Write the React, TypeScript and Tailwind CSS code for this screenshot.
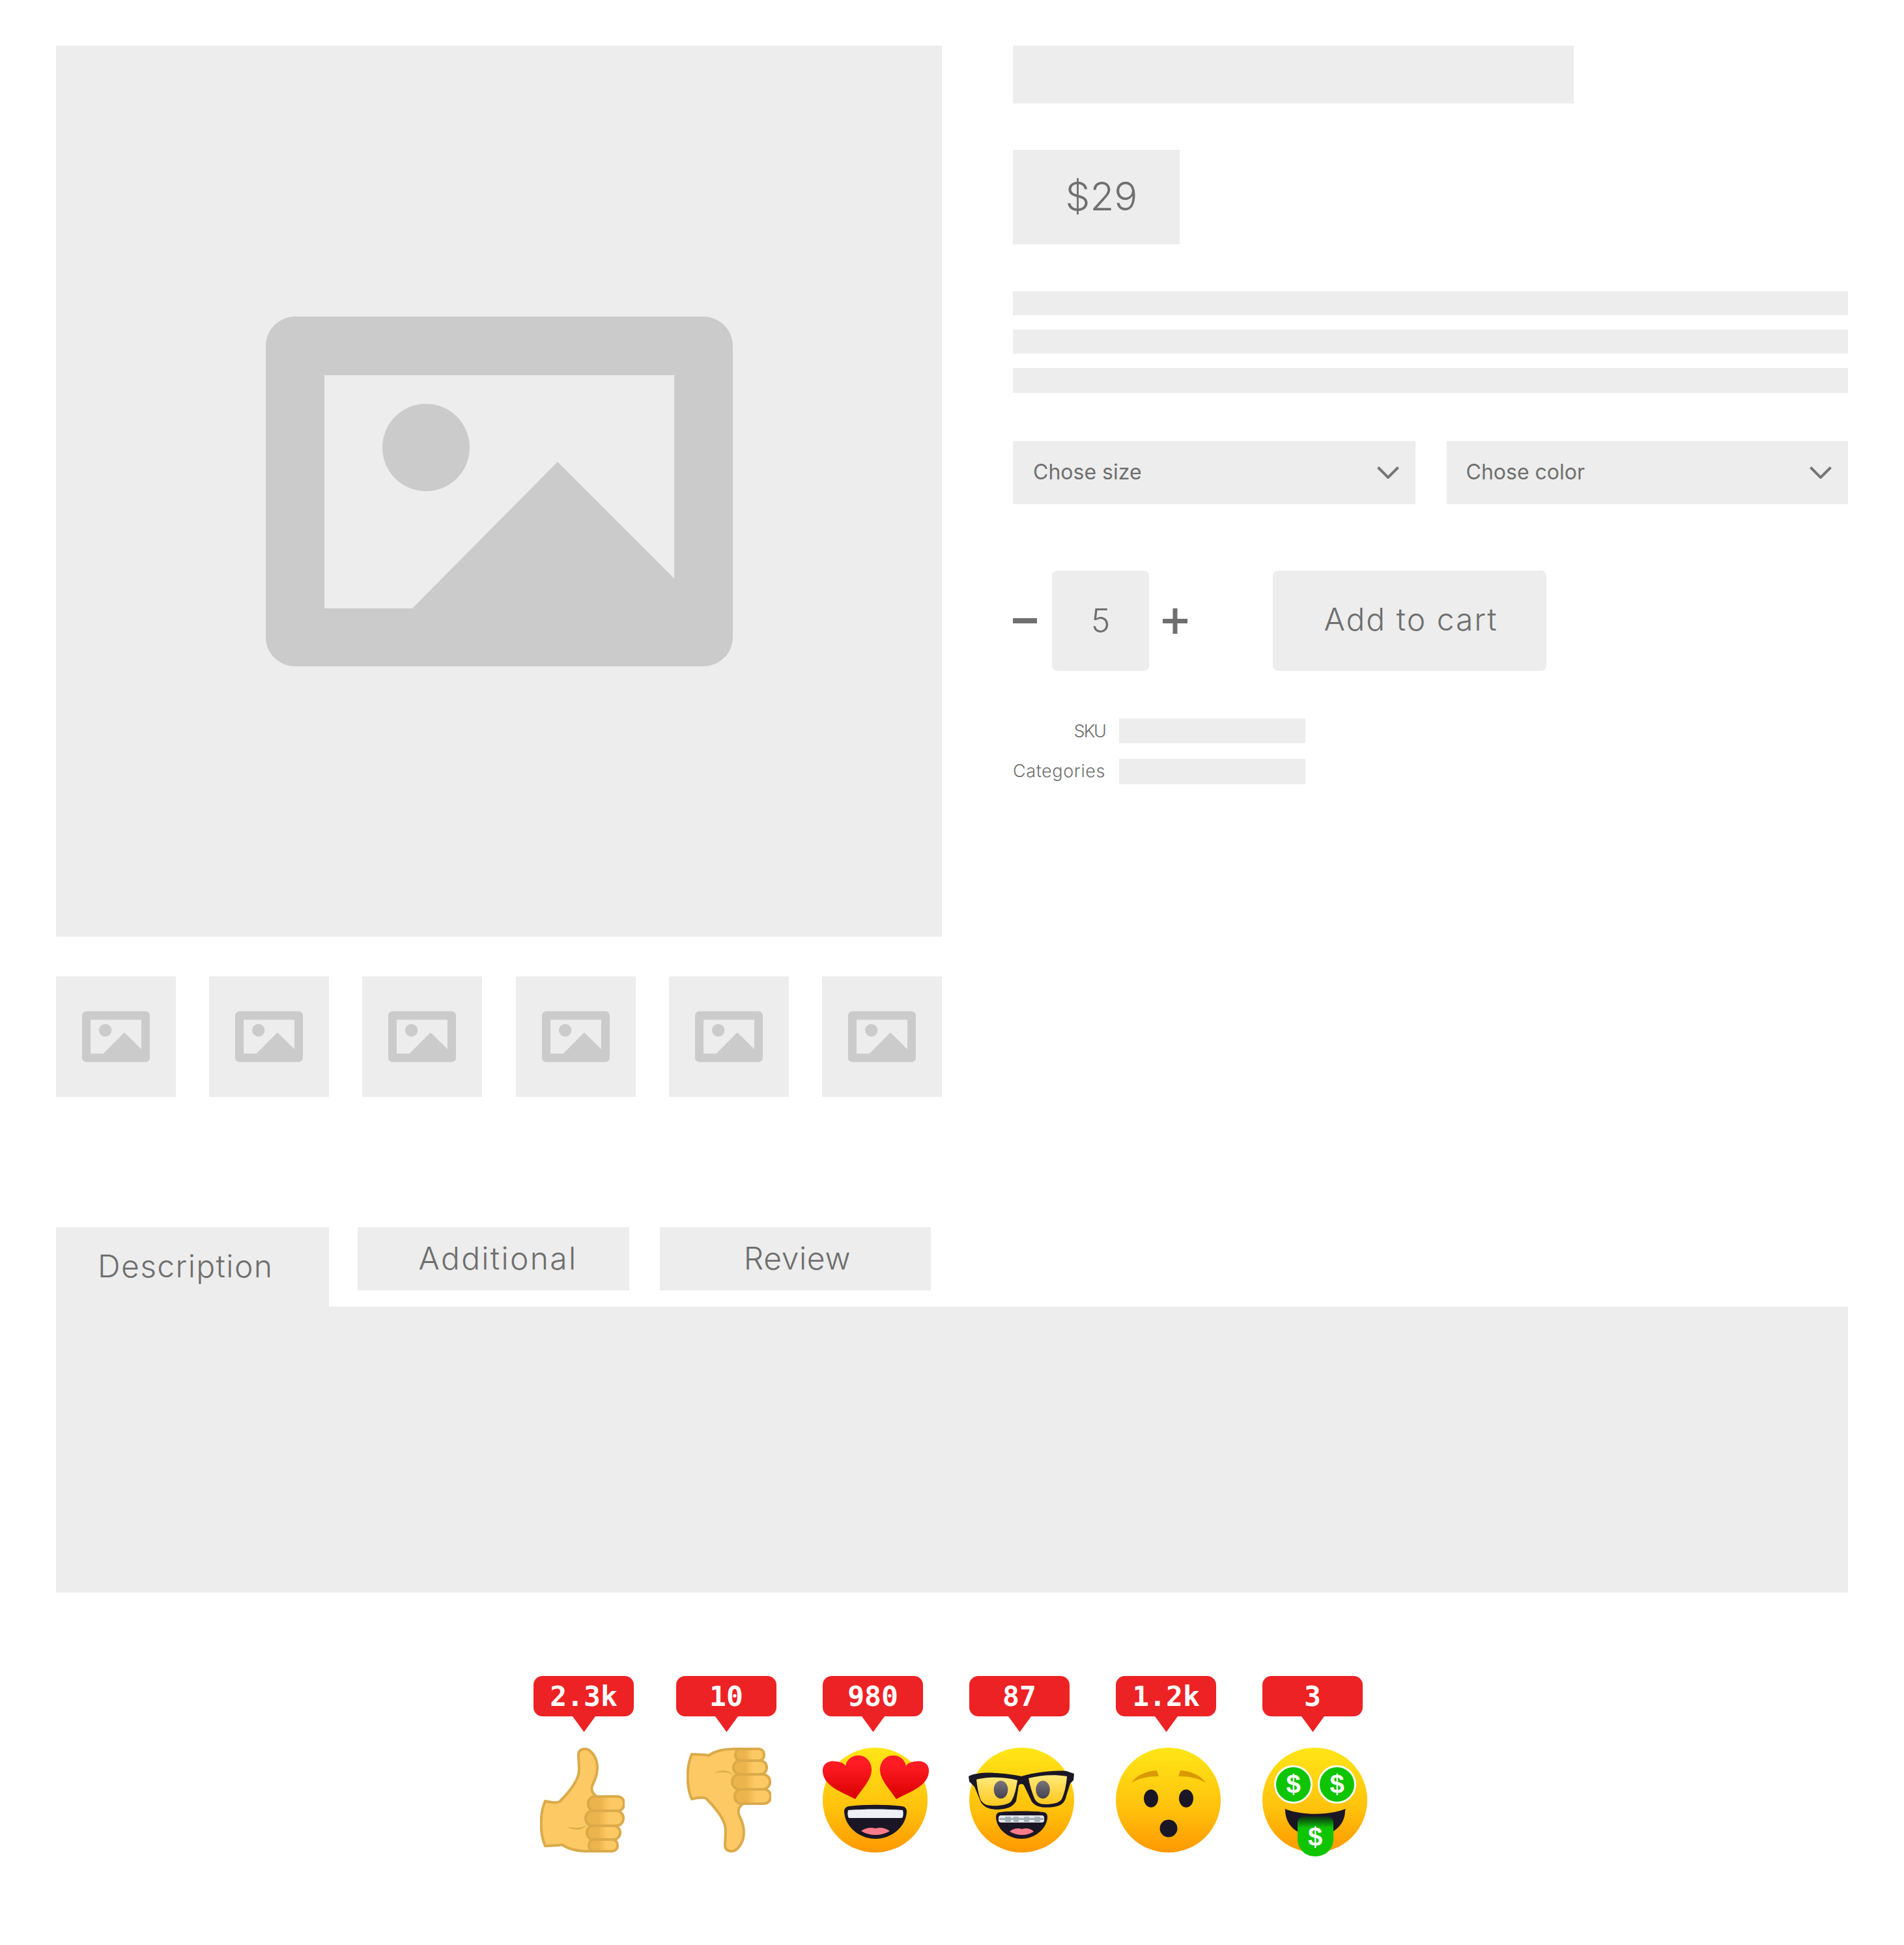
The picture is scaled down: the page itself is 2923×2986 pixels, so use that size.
const reactions = [
  { count: '2.3k', kind: 'up' },
  { count: '10', kind: 'down' },
  { count: '980', kind: 'love' },
  { count: '87', kind: 'nerd' },
  { count: '1.2k', kind: 'wow' },
  { count: '3', kind: 'money' },
]

function ImageIcon({ className }: { className: string }) {
  return (
    <svg viewBox="0 0 717 537" className={className} fill="#cbcbcb">
      <path
        fillRule="evenodd"
        d="M45 0H672A45 45 0 0 1 717 45V492A45 45 0 0 1 672 537H45A45 45 0 0 1 0 492V45A45 45 0 0 1 45 0ZM90 90V448H225L448 223L627 402V90Z"
      />
      <circle cx="246" cy="201" r="67" />
    </svg>
  )
}

function Chevron() {
  return (
    <svg viewBox="0 0 34 19" className="w-[34px] h-[19px]" fill="none" stroke="#757575" strokeWidth="4">
      <path d="M1.5 1.5L17 17L32.5 1.5" />
    </svg>
  )
}

function Thumb({ flip }: { flip?: boolean }) {
  const id = flip ? 'fd' : 'fu'
  return (
    <svg viewBox="0 0 130 161" className={`w-[130px] h-[161px] ${flip ? '-scale-y-100 ml-[16px]' : 'ml-[10px]'}`}>
      <defs>
        <linearGradient id={id} x1="0" x2="1" y1="0" y2="0">
          <stop offset="0.35" stopColor="#ecb44c" />
          <stop offset="0.6" stopColor="#fdc964" />
        </linearGradient>
      </defs>
      <path
        d="M8 82C16 84 25 85 30 83C45 68 60 50 60 34C60 25 59 18 59 11C59 5 63 2 69 2C78 2 88 15 88 31C88 42 84 50 80 59C78 66 82 72 87 75L90 159H74C58 159 44 156 34 149C25 151 16 150 8 151C-1 130 0 100 8 82Z"
        fill="#fdc964"
        stroke="#dbaa4a"
        strokeWidth="4"
        strokeLinejoin="round"
      />
      <path d="M42 122C52 123 62 125 72 119C63 128 52 127 42 122Z" fill="#dbaa4a" />
      <g fill={`url(#${id})`} stroke="#dbaa4a" strokeWidth="4">
        <rect x="75" y="141" width="44" height="18" rx="8" />
        <rect x="72" y="120" width="51" height="21" rx="10" />
        <rect x="70" y="97" width="58" height="23" rx="11" />
        <rect x="74" y="75" width="55" height="22" rx="10" />
      </g>
    </svg>
  )
}

function FaceBase({ id, children }: { id: string; children: React.ReactNode }) {
  return (
    <svg viewBox="0 0 161 161" className="w-[161px] h-[161px] overflow-visible">
      <defs>
        <linearGradient id={id} x1="0" x2="0" y1="0" y2="1">
          <stop offset="0" stopColor="#ffe617" />
          <stop offset="0.6" stopColor="#ffc00c" />
          <stop offset="1" stopColor="#ff9800" />
        </linearGradient>
      </defs>
      <circle cx="80.5" cy="80.5" r="80.5" fill={`url(#${id})`} />
      {children}
    </svg>
  )
}

function Love() {
  const heart = 'M50 79C30 68 2 60 0 37C-1 24 10 20 18 21C26 21 33 24 35 28C37 18 45 12 55 12C68 12 76 24 75 36C74 50 60 64 50 79Z'
  return (
    <FaceBase id="love">
      <defs>
        <linearGradient id="heart" x1="0" x2="0" y1="0" y2="1">
          <stop offset="0.2" stopColor="#ff1c24" />
          <stop offset="1" stopColor="#d90000" />
        </linearGradient>
      </defs>
      <path d={heart} fill="url(#heart)" />
      <path d={heart} fill="url(#heart)" transform="translate(163 0) scale(-1 1)" />
      <path d="M40 90C65 87 97 87 122 90C127 91 129 94 129 98C128 122 105 140 81 140C57 140 34 122 33 98C33 94 35 91 40 90Z" fill="#1a1626" />
      <path d="M39 96C65 94 97 94 123 96C124 100 124 105 122 108H40C38 105 38 100 39 96Z" fill="#eef0f6" />
      <path d="M59 128C66 123 74 122 81 124C88 122 96 123 103 128C96 132 89 134 81 134C73 134 66 132 59 128Z" fill="#ff7b8a" />
    </FaceBase>
  )
}

function Nerd() {
  return (
    <FaceBase id="nerd">
      <defs>
        <linearGradient id="lens" x1="0" x2="0" y1="0" y2="1">
          <stop offset="0" stopColor="#ffe97a" />
          <stop offset="1" stopColor="#ffc81e" />
        </linearGradient>
        <linearGradient id="pupil" x1="0" x2="0" y1="0" y2="1">
          <stop offset="0" stopColor="#77757c" />
          <stop offset="1" stopColor="#45414f" />
        </linearGradient>
      </defs>
      <path
        d="M-1 44C10 38 30 38 42 39C58 40 70 42 80 44C90 41 100 39 108 38C122 36 138 35 149 36L161 40L160 50L155 55L149 74C147 84 142 89 130 91C115 93 103 92 96 83L84 58C82 55 78 55 76 58L72 82C66 92 58 94 45 95C33 95 24 93 18 84L8 60L0 52Z"
        fill="#1a1626"
      />
      <path d="M11 49C25 45 50 44 74 50C72 62 70 74 64 83C58 88 45 90 34 89C25 89 20 85 17 79C14 70 12 60 11 49Z" fill="url(#lens)" />
      <path d="M91 47C110 42 130 41 150 44C149 58 146 70 142 79C138 85 128 87 117 87C108 87 103 84 100 78C96 68 93 58 91 47Z" fill="url(#lens)" />
      <ellipse cx="48.5" cy="64.5" rx="10.8" ry="13.7" fill="url(#pupil)" />
      <ellipse cx="113" cy="64.5" rx="10.8" ry="13.7" fill="url(#pupil)" />
      <path d="M47 99C65 97 97 97 114 99C119 100 120 103 120 107C119 125 100 140 80 140C60 140 42 125 41 107C41 103 42 100 47 99Z" fill="#1a1626" />
      <rect x="45" y="104" width="70" height="11" rx="4" fill="#e6e8ee" />
      <g fill="#a3b0b8">
        <rect x="46" y="108" width="68" height="3" />
        <rect x="55" y="106" width="9" height="8" rx="1" />
        <rect x="68" y="106" width="8" height="8" rx="1" />
        <rect x="84" y="106" width="8" height="8" rx="1" />
        <rect x="100" y="106" width="9" height="8" rx="1" />
      </g>
      <path d="M62 129C67 124 75 123 81 125C87 123 95 124 99 129C94 132 88 134 81 134C74 134 68 132 62 129Z" fill="#ff7b8a" />
    </FaceBase>
  )
}

function Wow() {
  return (
    <FaceBase id="wow">
      <path d="M24 54C30 44 45 36 63 35L66 44C50 44 35 47 24 54Z" fill="#d99a00" />
      <path d="M138 54C132 44 117 36 99 35L96 44C112 44 127 47 138 54Z" fill="#d99a00" />
      <ellipse cx="54" cy="78" rx="11" ry="13.7" fill="#1a1626" />
      <ellipse cx="108" cy="78" rx="11" ry="13.7" fill="#1a1626" />
      <ellipse cx="81" cy="124" rx="13.5" ry="13.5" fill="#1a1626" />
    </FaceBase>
  )
}

function Money() {
  const dollar = "font-['Liberation_Sans',sans-serif] font-bold"
  return (
    <FaceBase id="money">
      <defs>
        <linearGradient id="tongue" x1="0" x2="0" y1="0" y2="1">
          <stop offset="0.02" stopColor="#0d3a14" />
          <stop offset="0.28" stopColor="#0fc400" />
        </linearGradient>
      </defs>
      <circle cx="47.5" cy="56.5" r="28" fill="#0fc400" stroke="#fff" strokeWidth="3" />
      <circle cx="114.5" cy="56.5" r="28" fill="#0fc400" stroke="#fff" strokeWidth="3" />
      <text x="47.5" y="70" textAnchor="middle" fontSize="40" fill="#fff" className={dollar}>$</text>
      <text x="114.5" y="70" textAnchor="middle" fontSize="40" fill="#fff" className={dollar}>$</text>
      <path d="M35 95C33 93 34 94 37 95C62 104 100 104 125 95C128 94 128 93 127 97C127 110 120 122 108 129H54C42 122 35 110 35 95Z" fill="#1a1626" />
      <path d="M54 116C54 109 58 106 64 106H99C105 106 109 109 109 116V140C109 156 97 167 81 167C66 167 54 156 54 140Z" fill="url(#tongue)" />
      <text x="81" y="151" textAnchor="middle" fontSize="40" fill="#fff" className={dollar}>$</text>
    </FaceBase>
  )
}

function Reaction({ count, kind }: { count: string; kind: string }) {
  return (
    <div className={`flex flex-col gap-[24px] ${kind === 'up' ? 'w-[155px]' : 'w-[161px]'}`}>
      <div className="w-[154px]">
        <div className="h-[62px] rounded-[14px] bg-[#ed2224] flex items-center justify-center text-white text-[43px] leading-none font-bold font-['DejaVu_Sans_Mono',monospace]">
          {count}
        </div>
        <svg viewBox="0 0 35 24" className="w-[35px] h-[24px] mx-auto block" fill="#ed2224">
          <path d="M0 0H35L17.5 24Z" />
        </svg>
      </div>
      {kind === 'up' && <Thumb />}
      {kind === 'down' && <Thumb flip />}
      {kind === 'love' && <Love />}
      {kind === 'nerd' && <Nerd />}
      {kind === 'wow' && <Wow />}
      {kind === 'money' && <Money />}
    </div>
  )
}

export default function App() {
  return (
    <div className="min-h-screen bg-white pt-[70px] px-[86px] text-[#6f6f6f] font-['Inter',sans-serif] font-light">
      <div className="flex gap-[109px]">
        <div className="w-[1360px]">
          <div className="h-[1368px] bg-[#ededed] flex items-center justify-center">
            <ImageIcon className="w-[717px] h-[537px]" />
          </div>
          <div className="mt-[61px] flex justify-between">
            {[0, 1, 2, 3, 4, 5].map((i) => (
              <div key={i} className="w-[184px] h-[185px] bg-[#ededed] flex items-center justify-center">
                <ImageIcon className="w-[104px] h-[79px]" />
              </div>
            ))}
          </div>
        </div>

        <div className="flex-1">
          <div className="w-[861px] h-[89px] bg-[#ededed]" />
          <div className="mt-[71px] w-[256px] h-[145px] bg-[#ededed] flex items-center justify-center pl-[16px] pb-[3px] text-[60px]">
            $29
          </div>
          <div className="mt-[72px] flex flex-col gap-[22px]">
            <div className="h-[37px] bg-[#ededed]" />
            <div className="h-[37px] bg-[#ededed]" />
            <div className="h-[38px] bg-[#ededed]" />
          </div>
          <div className="mt-[74px] flex gap-[48px]">
            <div className="flex-1 h-[97px] bg-[#ededed] flex items-center justify-between pl-[31px] pr-[25px] text-[32px] font-normal">
              <span className="pb-[2px]">Chose size</span>
              <Chevron />
            </div>
            <div className="flex-1 h-[97px] bg-[#ededed] flex items-center justify-between pl-[30px] pr-[25px] text-[32px] font-normal">
              <span className="pb-[2px]">Chose color</span>
              <Chevron />
            </div>
          </div>
          <div className="mt-[102px] flex items-center">
            <div className="w-[37px] h-[8px] bg-[#6f6f6f]" />
            <div className="ml-[23px] w-[149px] h-[154px] rounded-[8px] bg-[#ededed] flex items-center justify-center text-[50px]">
              5
            </div>
            <svg viewBox="0 0 38 39" className="ml-[21px] w-[38px] h-[39px]" fill="#6f6f6f">
              <path d="M15.5 0H22.5V16H38V23H22.5V39H15.5V23H0V16H15.5Z" />
            </svg>
            <div className="ml-[131px] w-[420px] h-[154px] rounded-[8px] bg-[#ededed] flex items-center justify-center pl-[4px] pb-[4px] text-[48px] tracking-[2px]">
              Add to cart
            </div>
          </div>
          <div className="mt-[73px] flex flex-col gap-[24px] text-[27px] leading-none">
            <div className="flex items-center gap-[21px]">
              <span className="w-[142px] text-right tracking-[-2px]">SKU</span>
              <div className="w-[286px] h-[38px] bg-[#ededed]" />
            </div>
            <div className="flex items-center gap-[21px]">
              <span className="w-[142px] text-right tracking-[0.6px] pb-[3px]">Categories</span>
              <div className="w-[286px] h-[39px] bg-[#ededed]" />
            </div>
          </div>
        </div>
      </div>

      <div className="mt-[200px] flex items-start">
        <div className="w-[419px] h-[122px] bg-[#ededed] pl-[64px] pt-[28px] text-[48px] leading-[64px] tracking-[1.4px]">Description</div>
        <div className="ml-[44px] w-[417px] h-[97px] bg-[#ededed] flex items-center justify-center pl-[14px] pb-[2px] text-[48px] tracking-[2.3px]">Additional</div>
        <div className="ml-[47px] w-[416px] h-[97px] bg-[#ededed] flex items-center justify-center pl-[6px] pb-[2px] text-[48px] tracking-[0.6px]">Review</div>
      </div>
      <div className="h-[439px] bg-[#ededed]" />

      <div className="mt-[128px] flex justify-center gap-[64px] pr-[5px]">
        {reactions.map((r) => (
          <Reaction key={r.kind} count={r.count} kind={r.kind} />
        ))}
      </div>
    </div>
  )
}
